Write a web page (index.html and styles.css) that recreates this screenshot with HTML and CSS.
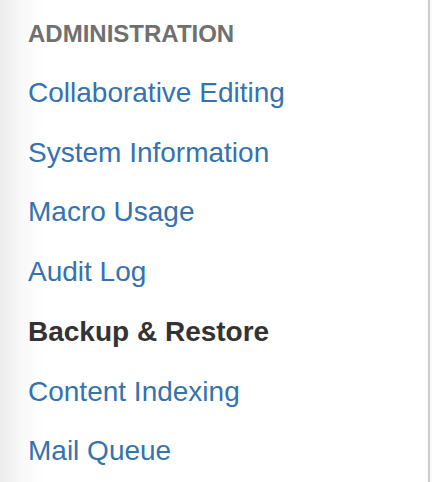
FILE: index.html
```html
<!DOCTYPE html>
<html lang="en">
<head>
    <meta charset="UTF-8">
    <meta name="viewport" content="width=device-width, initial-scale=1.0">
    <title>Administration</title>
    <link rel="stylesheet" href="styles.css">
</head>
<body>
    <nav class="sidebar">
        <h2 class="nav-heading">Administration</h2>
        <ul class="nav-list">
            <li><a href="#">Collaborative Editing</a></li>
            <li><a href="#">System Information</a></li>
            <li><a href="#">Macro Usage</a></li>
            <li><a href="#">Audit Log</a></li>
            <li class="active"><a href="#">Backup &amp; Restore</a></li>
            <li><a href="#">Content Indexing</a></li>
            <li><a href="#">Mail Queue</a></li>
        </ul>
    </nav>
</body>
</html>
```

FILE: styles.css
```css
* {
    margin: 0;
    padding: 0;
    box-sizing: border-box;
}

html, body {
    height: 100%;
}

body {
    font-family: "Liberation Sans", Arial, sans-serif;
    background: #fafafa;
    overflow: hidden;
}

.sidebar {
    width: 430px;
    height: 100%;
    padding: 20px 0 0 28px;
    background: linear-gradient(to right, #ececec 0, #f8f8f8 20px, #fff 45px);
    border-right: 2px solid #cccccc;
}

.nav-heading {
    font-size: 24px;
    line-height: 28px;
    font-weight: bold;
    text-transform: uppercase;
    color: #707070;
    margin-bottom: 15px;
}

.nav-list {
    list-style: none;
}

.nav-list li {
    font-size: 28px;
    line-height: 59.7px;
}

.nav-list a {
    color: #3572b0;
    text-decoration: none;
}

.nav-list li.active a {
    color: #333333;
    font-weight: bold;
}
```
